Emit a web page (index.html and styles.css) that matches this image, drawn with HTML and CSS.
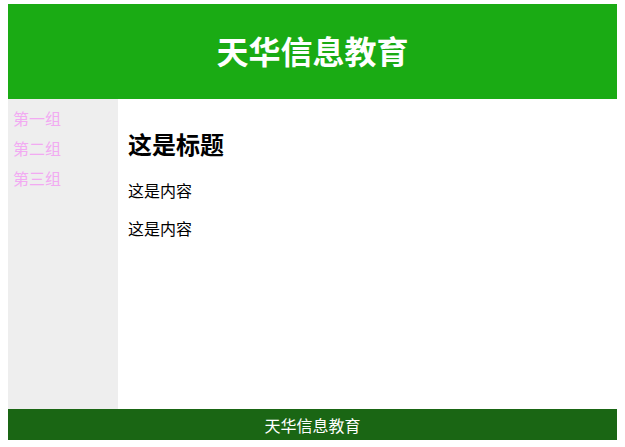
FILE: index.html
```html
<!DOCTYPE html>
<html lang="zh">
<head>
<meta charset="utf-8">
<title>天华信息教育</title>
<link rel="stylesheet" href="styles.css">
</head>
<body>
<div class="page">
  <header class="header"><h1 class="title">天华信息教育</h1></header>
  <div class="middle">
    <nav class="side">
      <a class="side-link" href="#">第一组</a>
      <a class="side-link" href="#">第二组</a>
      <a class="side-link" href="#">第三组</a>
    </nav>
    <main class="content">
      <h2 class="heading">这是标题</h2>
      <p class="text">这是内容</p>
      <p class="text">这是内容</p>
    </main>
  </div>
  <footer class="footer">天华信息教育</footer>
</div>
</body>
</html>
```

FILE: styles.css
```css
html, body { margin: 0; padding: 0; background: #fff; }
body {
  padding: 4px 8px 0 8px;
  font-family: "Microsoft YaHei", "Noto Sans CJK SC", sans-serif;
}
.page { display: flex; flex-direction: column; width: 609px; }
.header {
  height: 95px;
  background: #1aab14;
  display: flex;
  align-items: center;
  justify-content: center;
}
.title {
  margin: 0;
  color: #fff;
  font-size: 32px;
  font-weight: bold;
  line-height: 1;
  padding-bottom: 4px;
}
.middle { display: flex; height: 310px; }
.side {
  width: 110px;
  background: #eeeeee;
  display: flex;
  flex-direction: column;
  gap: 8px;
  padding: 8px 0 0 5px;
  box-sizing: border-box;
}
.side-link {
  color: #f2aaf2;
  text-decoration: none;
  font-size: 16px;
  line-height: 22px;
}
.content { flex: 1; padding: 30px 10px 0 10px; }
.heading {
  margin: 0 0 20px 0;
  font-size: 24px;
  font-weight: bold;
  line-height: 30px;
  color: #000;
}
.text {
  margin: 0 0 15px 0;
  font-size: 16px;
  line-height: 22px;
  color: #000;
}
.text + .text { margin-top: 16px; }
.footer {
  height: 31px;
  background: #1a6614;
  color: #fff;
  font-size: 16px;
  display: flex;
  align-items: center;
  justify-content: center;
}
```
